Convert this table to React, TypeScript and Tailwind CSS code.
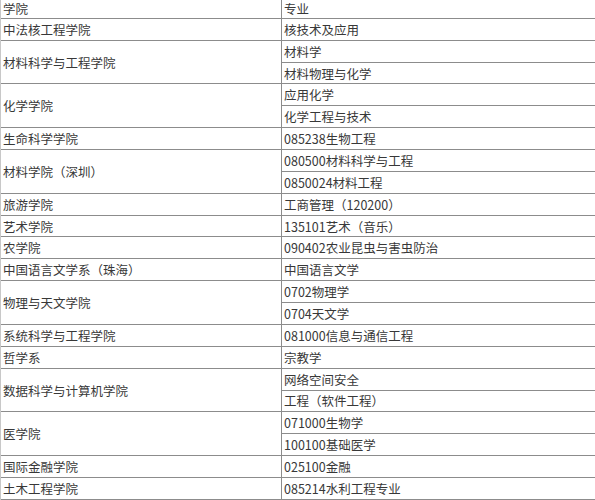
import React from 'react';

type Row = { school: string; majors: string[] };

const rows: Row[] = [
  { school: '中法核工程学院', majors: ['核技术及应用'] },
  { school: '材料科学与工程学院', majors: ['材料学', '材料物理与化学'] },
  { school: '化学学院', majors: ['应用化学', '化学工程与技术'] },
  { school: '生命科学学院', majors: ['085238生物工程'] },
  { school: '材料学院（深圳）', majors: ['080500材料科学与工程', '0850024材料工程'] },
  { school: '旅游学院', majors: ['工商管理（120200）'] },
  { school: '艺术学院', majors: ['135101艺术（音乐）'] },
  { school: '农学院', majors: ['090402农业昆虫与害虫防治'] },
  { school: '中国语言文学系（珠海）', majors: ['中国语言文学'] },
  { school: '物理与天文学院', majors: ['0702物理学', '0704天文学'] },
  { school: '系统科学与工程学院', majors: ['081000信息与通信工程'] },
  { school: '哲学系', majors: ['宗教学'] },
  { school: '数据科学与计算机学院', majors: ['网络空间安全', '工程（软件工程）'] },
  { school: '医学院', majors: ['071000生物学', '100100基础医学'] },
  { school: '国际金融学院', majors: ['025100金融'] },
  { school: '土木工程学院', majors: ['085214水利工程专业'] },
];

const cell =
  'box-border flex items-center border-b border-r border-[#8c8c8c] pl-[2px] leading-[15px] whitespace-nowrap overflow-hidden';

export default function App() {
  return (
    <div
      className="w-[595px] h-[500px] overflow-hidden bg-white text-[12.5px] text-[#383838]"
      style={{ fontFamily: '"Noto Sans CJK SC", "Noto Sans", sans-serif' }}
    >
      <div className="-mt-[2px] grid grid-cols-[281px_314px] grid-rows-[20.9px_repeat(22,21.86px)] border-l border-[#c8c8c8]">
        <div className={cell + ' pt-[2px]'}>学院</div>
        <div className={cell + ' pt-[2px]'}>专业</div>
        {rows.map((r) => (
          <React.Fragment key={r.school}>
            <div
              className={cell + (r.majors.length === 2 ? ' row-span-2' : '')}
            >
              {r.school}
            </div>
            {r.majors.map((m) => (
              <div key={m} className={cell}>
                {m}
              </div>
            ))}
          </React.Fragment>
        ))}
      </div>
    </div>
  );
}
